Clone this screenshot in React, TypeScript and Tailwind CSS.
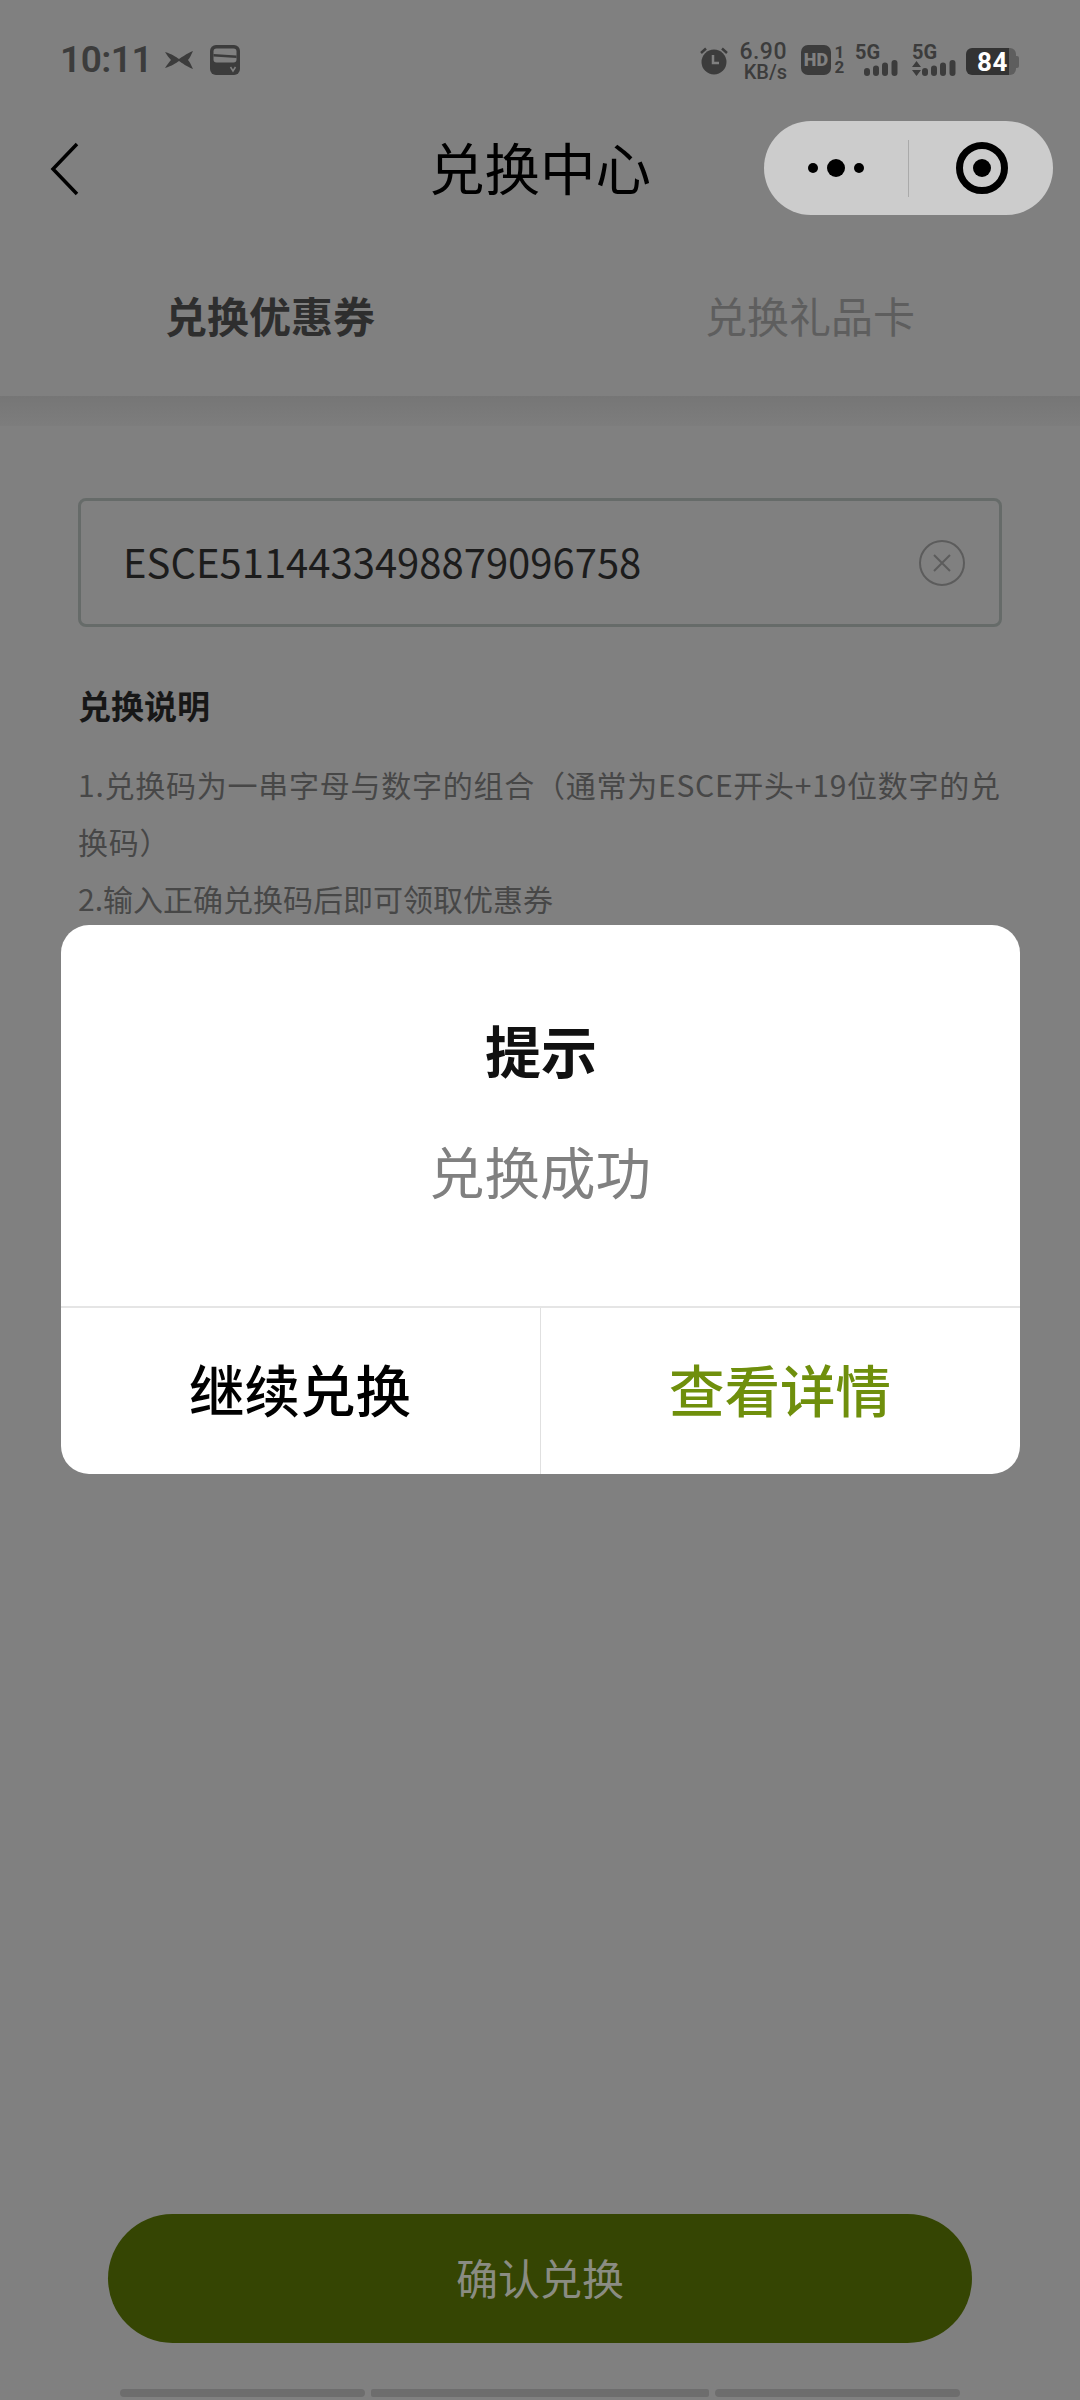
import React from "react";

const SANS = "font-['Noto_Sans_CJK_SC','Noto_Sans',sans-serif]";

function SignalBars() {
  return (
    <svg width="34" height="16" viewBox="0 0 34 16" fill="#3c3c3c">
      <rect x="0" y="8" width="6" height="8" rx="3" />
      <rect x="9" y="5.5" width="6" height="10.5" rx="3" />
      <rect x="18" y="2.5" width="6" height="13.5" rx="3" />
      <rect x="27.5" y="0" width="6" height="16" rx="3" />
    </svg>
  );
}

function StatusBar() {
  return (
    <div className="h-[121px] pt-[45px] pl-[60px] pr-[61px] flex justify-between items-start text-[#3c3c3c]">
      <div className="flex items-center h-[30px]">
        <span className="font-['Roboto',sans-serif] font-semibold text-[37px] leading-[30px] -tracking-[0.5px] w-[105px]">10:11</span>
        <svg width="28" height="18" viewBox="0 0 28 18" fill="#3c3c3c">
          <path d="M0 1 C7 3 11 6 14 8 C17 6 21 3 28 0 C26 4 25 7 23 9 C25 11 26 14 28 18 C21 15 17 12 14 10 C11 12 7 15 0 17 C2 14 4 11 6 9 C4 7 2 4 0 1 Z" />
        </svg>
        <svg className="ml-[17px]" width="30" height="30" viewBox="0 0 30 30">
          <rect width="30" height="30" rx="6" fill="#3c3c3c" />
          <rect x="3.5" y="3.5" width="23" height="14" rx="3" fill="#808080" />
          <path d="M3.5 9 L26.5 10.5 V13 L3.5 11.5 Z" fill="#3c3c3c" />
          <path d="M20.5 22 L23 26 L25.5 22" fill="none" stroke="#808080" strokeWidth="1.5" />
        </svg>
      </div>
      <div className="flex items-start h-[32px]">
        <svg className="mt-[2px]" width="28" height="28" viewBox="0 0 28 28" fill="#3c3c3c">
          <circle cx="14" cy="15" r="12.5" />
          <path d="M13 8 V16 H19" fill="none" stroke="#808080" strokeWidth="2.5" />
          <path d="M1 6 L6 1.5 M27 6 L22 1.5" stroke="#3c3c3c" strokeWidth="2.5" />
        </svg>
        <div className="ml-[12px] w-[47px] -mt-[3px] flex flex-col items-end font-['Roboto',sans-serif] font-medium">
          <span className="text-[23px] leading-[20px] tracking-[0.5px]">6.90</span>
          <span className="text-[20px] leading-[20px]">KB/s</span>
        </div>
        <div className="ml-[14px] w-[30px] h-[30px] rounded-[7px] bg-[#3c3c3c] text-[#808080] flex items-center justify-center font-['Roboto',sans-serif] font-black text-[18px] leading-none">HD</div>
        <div className="ml-[3px] w-[11px] flex flex-col items-center font-['Roboto',sans-serif] font-bold text-[17px] leading-[15px]">
          <span>1</span>
          <span>2</span>
        </div>
        <div className="ml-[10px] w-[43px] flex flex-col font-['Roboto',sans-serif] font-bold text-[20px] leading-[15px]">
          <span>5G</span>
          <span className="self-end"><SignalBars /></span>
        </div>
        <div className="ml-[14px] w-[44px] flex flex-col font-['Roboto',sans-serif] font-bold text-[20px] leading-[15px]">
          <span>5G</span>
          <div className="flex items-end justify-between">
            <svg width="9" height="15" viewBox="0 0 9 15" fill="#3c3c3c">
              <path d="M4.5 0 L9 6 H0 Z M0 9 H9 L4.5 15 Z" />
            </svg>
            <SignalBars />
          </div>
        </div>
        <div className="ml-[10px] mt-[3px] flex items-center">
          <div className="w-[50px] h-[27px] rounded-[6px] bg-[linear-gradient(90deg,#333333_86%,#5e5e5e_86%)] flex items-center pl-[11px] text-white font-['Roboto',sans-serif] font-bold text-[26px] leading-none tracking-[0.5px]">84</div>
          <div className="w-[3px] h-[12px] rounded-r-[2px] bg-[#5e5e5e]" />
        </div>
      </div>
    </div>
  );
}

function NavBar() {
  return (
    <div className="relative h-[94px] flex items-center justify-center">
      <svg className="absolute left-[50px] top-[21px]" width="30" height="54" viewBox="0 0 30 54" fill="none" stroke="#000" strokeWidth="3.5">
        <path d="M27 2 L3 27 L27 52" />
      </svg>
      <h1 className="text-[55.5px] leading-[70px] text-black font-normal -mt-[4px]">兑换中心</h1>
      <div className="absolute left-[764px] top-0 w-[289px] h-[94px] rounded-full bg-[#cccccc] flex items-center">
        <div className="w-[144px] flex items-center justify-center gap-[9px]">
          <span className="w-[10px] h-[10px] rounded-full bg-black" />
          <span className="w-[18px] h-[18px] rounded-full bg-black" />
          <span className="w-[10px] h-[10px] rounded-full bg-black" />
        </div>
        <div className="w-px h-[57px] bg-[#aaaaaa]" />
        <div className="flex-1 flex items-center justify-center pl-[2px]">
          <span className="w-[52px] h-[52px] rounded-full border-[7px] border-black flex items-center justify-center">
            <span className="w-[18px] h-[18px] rounded-full bg-black" />
          </span>
        </div>
      </div>
    </div>
  );
}

function Tabs() {
  return (
    <div className="h-[181px] pt-[19px] flex items-center">
      <div className="w-1/2 text-center text-[42px] leading-[56px] font-bold text-[#2e2e2e]">兑换优惠券</div>
      <div className="w-1/2 text-center text-[42px] leading-[56px] font-normal text-[#5e5e5e]">兑换礼品卡</div>
    </div>
  );
}

function CodeField() {
  return (
    <div className="h-[129px] rounded-[8px] border-[3px] border-[#666b69] pl-[42px] pr-[34px] flex items-center justify-between">
      <span className="text-[40px] leading-[50px] text-[#1c1c1c] -mt-[3px]">ESCE5114433498879096758</span>
      <svg width="46" height="46" viewBox="0 0 46 46" fill="none" stroke="#5c5c5c" strokeWidth="2">
        <circle cx="23" cy="23" r="22" />
        <path d="M15 15 L31 31 M31 15 L15 31" />
      </svg>
    </div>
  );
}

function Notes() {
  return (
    <div>
      <h2 className="mt-[58px] text-[33px] leading-[40px] font-bold text-[#171717]">兑换说明</h2>
      <p className="mt-[31px] text-[30px] leading-[57px] tracking-[0.75px] text-[#474747]">
        1.兑换码为一串字母与数字的组合（通常为ESCE开头+19位数字的兑换码）
      </p>
      <p className="text-[30px] leading-[57px] text-[#474747]">2.输入正确兑换码后即可领取优惠券</p>
    </div>
  );
}

function SuccessDialog() {
  return (
    <div className="absolute inset-0 pb-[2px] flex items-center justify-center">
      <div className="w-[959px] h-[549px] rounded-[28px] bg-white overflow-hidden flex flex-col">
        <div className="h-[381px] flex flex-col items-center">
          <div className="mt-[89px] ml-[2px] text-[56px] leading-[70px] font-bold text-[#111111]">提示</div>
          <div className="mt-[50px] text-[55.5px] leading-[72px] text-[#808080]">兑换成功</div>
        </div>
        <div className="flex-1 flex border-t-2 border-[#e5e5e5]">
          <button className="flex-1 text-[55.5px] font-medium text-black pb-[4px]">继续兑换</button>
          <div className="w-px bg-[#e0e0e0]" />
          <button className="flex-1 text-[55.5px] font-medium text-[#6f8f0c] pb-[4px]">查看详情</button>
        </div>
      </div>
    </div>
  );
}

function Footer() {
  return (
    <div className="mt-auto flex flex-col items-center">
      <button className="w-[864px] h-[129px] pb-[5px] rounded-full bg-[#354503] text-[42px] text-[#8a8c82]">确认兑换</button>
      <div className="mt-[46px] mb-[3px] h-[8px] w-[840px] flex gap-[6px]">
        <div className="w-[245px] rounded-full bg-[#6d6d6d]" />
        <div className="flex-1 rounded-[2px] bg-[#6d6d6d]" />
        <div className="w-[245px] rounded-full bg-[#6d6d6d]" />
      </div>
    </div>
  );
}

export default function App() {
  return (
    <div className={`relative w-[1080px] h-[2400px] overflow-hidden bg-[#808080] flex flex-col ${SANS}`}>
      <StatusBar />
      <NavBar />
      <Tabs />
      <div className="h-[30px] bg-[linear-gradient(180deg,#767676,#7d7d7d)]" />
      <div className="px-[78px] pt-[72px]">
        <CodeField />
        <Notes />
      </div>
      <Footer />
      <SuccessDialog />
    </div>
  );
}
